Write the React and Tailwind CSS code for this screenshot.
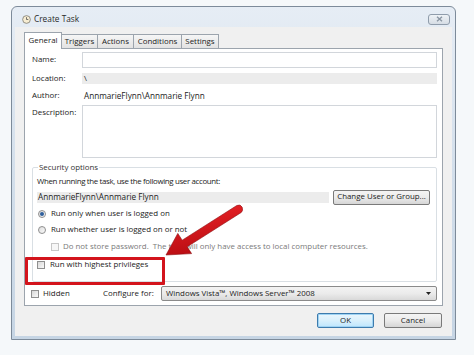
import React from "react";

function Checkbox({ disabled }) {
  return (
    <span
      className={
        "inline-block w-[8px] h-[8px] border shrink-0 " +
        (disabled
          ? "border-[#c7c7c7] bg-[#f7f7f7]"
          : "border-[#8f8f8f] bg-gradient-to-br from-[#d8d8d8] to-[#fafafa]")
      }
    />
  );
}

function Radio({ checked }) {
  return (
    <span className="w-[8px] h-[8px] rounded-full border border-[#8f8f8f] bg-gradient-to-br from-[#dcdcdc] to-[#fbfbfb] flex items-center justify-center shrink-0">
      {checked && <span className="w-[4px] h-[4px] rounded-full bg-[#2f5f9c]" />}
    </span>
  );
}

function Tab({ w, label, selected }) {
  return selected ? (
    <div
      className={`${w} h-[17px] -mb-[1px] z-10 bg-white border border-b-0 border-[#9ca4ad] flex items-center justify-center`}
    >
      {label}
    </div>
  ) : (
    <div
      className={`${w} h-[14px] -ml-[1px] bg-gradient-to-b from-[#f6f6f6] to-[#e2e2e2] border border-b-0 border-[#9ca4ad] flex items-center justify-center`}
    >
      {label}
    </div>
  );
}

export default function App() {
  return (
    <div className="w-[474px] h-[355px] bg-[#f5f8fa] pt-[6px] pl-[11px] relative overflow-hidden font-['Open_Sans',sans-serif] text-[7.9px] leading-none text-[#222]">
      {/* window */}
      <div className="w-[445px] h-[334px] border border-[#7d8b9a] rounded-t-[6px] bg-gradient-to-b from-[#e6edf5] via-[#d3dfeb] to-[#c6d5e4] flex flex-col px-[3px] pb-[3px]">
        {/* title bar */}
        <div className="h-[20px] flex items-center pt-[4px] pl-[7px] pr-[2px]">
          <svg width="9" height="9" viewBox="0 0 10 10" className="shrink-0">
            <circle cx="5" cy="5" r="4.3" fill="#f7edd2" stroke="#7d7a72" strokeWidth="0.9" />
            <path d="M5 2.4V5h2" stroke="#555" strokeWidth="0.9" fill="none" />
          </svg>
          <span className="ml-[3px] text-[8.3px] text-[#2a2a2a]">Create Task</span>
          <div className="ml-auto w-[22px] h-[11px] rounded-[3px] border border-[#8f9cab] bg-gradient-to-b from-[#eef2f6] to-[#d6dde5] flex items-center justify-center">
            <svg width="7" height="6" viewBox="0 0 7 6">
              <path d="M1 0.8L6 5.2M6 0.8L1 5.2" stroke="#8a96a3" strokeWidth="1.4" />
            </svg>
          </div>
        </div>

        {/* client */}
        <div className="flex-1 bg-[#f0f0f0] flex flex-col pl-[9px] pt-[5px]">
          {/* tabs */}
          <div className="flex items-end h-[16px]">
            <Tab w="w-[38px]" label="General" selected />
            <Tab w="w-[37px]" label="Triggers" />
            <Tab w="w-[37px]" label="Actions" />
            <Tab w="w-[49px]" label="Conditions" />
            <Tab w="w-[38px]" label="Settings" />
          </div>

          {/* panel */}
          <div className="w-[419px] h-[258px] bg-white border border-[#9ca4ad] flex flex-col pl-[7px] pr-[5px] pt-[3px]">
            {/* Name */}
            <div className="flex items-center h-[16px]">
              <span className="w-[50px]">Name:</span>
              <div className="flex-1 h-[16px] border border-[#d2d6db] bg-white" />
            </div>
            {/* Location */}
            <div className="flex items-center h-[11px] mt-[5px]">
              <span className="w-[50px]">Location:</span>
              <div className="flex-1 h-[11px] bg-[#ececec] flex items-center pl-[2px]">\</div>
            </div>
            {/* Author */}
            <div className="flex items-center h-[12px] mt-[6px]">
              <span className="w-[50px]">Author:</span>
              <span className="pl-[2px] text-[8.2px]">AnnmarieFlynn\Annmarie Flynn</span>
            </div>
            {/* Description */}
            <div className="flex h-[53px] mt-[3px]">
              <span className="w-[50px] pt-[4px]">Description:</span>
              <div className="flex-1 border border-[#d2d6db] bg-white" />
            </div>

            {/* Security options */}
            <fieldset className="mt-[6px] h-[118px] border border-[#d9dfe4] rounded-[2px] pl-[4px] pr-[6px]">
              <legend className="px-[1px] ml-[1px] text-[#333]">Security options</legend>
              <div className="h-[10px] flex items-center mt-[5px] tracking-[-0.35px]">
                When running the task, use the following user account:
              </div>
              <div className="flex items-center mt-[3px] h-[15px]">
                <div className="w-[292px] h-[11px] bg-[#ececec] flex items-center pl-[1px] text-[8.2px]">
                  AnnmarieFlynn\Annmarie Flynn
                </div>
                <button className="ml-[4px] w-[97px] h-[15px] rounded-[2px] border border-[#7a7a7a] bg-gradient-to-b from-[#f4f4f4] via-[#ebebeb] to-[#d6d6d6] text-[7.9px] leading-none">
                  Change User or Group...
                </button>
              </div>
              <div className="flex items-center h-[10px] mt-[4px] pl-[1px]">
                <Radio checked />
                <span className="ml-[5px]">Run only when user is logged on</span>
              </div>
              <div className="flex items-center h-[10px] mt-[6px] pl-[1px]">
                <Radio />
                <span className="ml-[5px]">Run whether user is logged on or not</span>
              </div>
              <div className="flex items-center h-[10px] mt-[7px] pl-[14px] text-[#7a7a7a]">
                <Checkbox disabled />
                <span className="ml-[4px]">
                  Do not store password.&nbsp; The task will only have access to local computer resources.
                </span>
              </div>
              <div className="flex items-center h-[10px] mt-[8px]">
                <Checkbox />
                <span className="ml-[5px]">Run with highest privileges</span>
              </div>
            </fieldset>

            {/* Hidden / Configure */}
            <div className="flex items-center h-[15px] mt-[4px] -ml-[1px]">
              <Checkbox />
              <span className="ml-[4px] w-[60px]">Hidden</span>
              <span className="w-[58px]">Configure for:</span>
              <div className="flex-1 h-[15px] rounded-[2px] border border-[#8a8a8a] bg-gradient-to-b from-[#f3f3f3] via-[#ebebeb] to-[#d9d9d9] flex items-center pl-[4px] pr-[5px]">
                <span>Windows Vista™, Windows Server™ 2008</span>
                <svg width="5" height="3" viewBox="0 0 5 3" className="ml-auto">
                  <path d="M0 0H5L2.5 3Z" fill="#222" />
                </svg>
              </div>
            </div>
          </div>

          {/* buttons */}
          <div className="flex justify-end mt-[7px] w-[418px]">
            <button className="w-[57px] h-[15px] rounded-[2px] border border-[#3d7bad] bg-gradient-to-b from-[#eaf6fd] via-[#d9f0fc] to-[#bee6fd] text-[7.9px] leading-none shadow-[inset_0_0_0_1px_#9fd3f3]">
              OK
            </button>
            <button className="ml-[10px] w-[58px] h-[15px] rounded-[2px] border border-[#7a7a7a] bg-gradient-to-b from-[#f4f4f4] via-[#ebebeb] to-[#d6d6d6] text-[7.9px] leading-none">
              Cancel
            </button>
          </div>
        </div>
      </div>

      {/* annotation: red box */}
      <div className="absolute left-[25px] top-[257px] w-[140px] h-[28px] border-[3px] border-[#d3141c] rounded-[1px]" />

      {/* annotation: red arrow */}
      <svg className="absolute left-0 top-0" width="474" height="355" viewBox="0 0 474 355">
        <defs>
          <linearGradient id="arrowGrad" x1="0" y1="0" x2="0.3" y2="1">
            <stop offset="0" stopColor="#f0262a" />
            <stop offset="1" stopColor="#b90d12" />
          </linearGradient>
        </defs>
        <path
          d="M241.2 212.5 L187.2 246.8 L191.6 253.6 L166 255 L177.8 233.4 L182.2 240.2 L236.8 205.5 Q240.5 203.8 242.2 207.2 Q243.4 210.8 241.2 212.5 Z"
          fill="url(#arrowGrad)"
          stroke="#8d0a0e"
          strokeWidth="0.6"
        />
      </svg>
    </div>
  );
}
